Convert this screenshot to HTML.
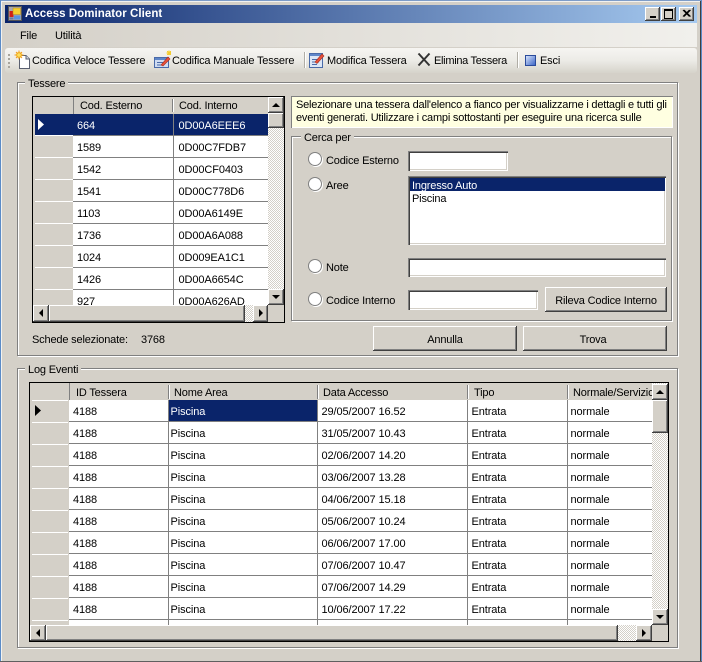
<!DOCTYPE html>
<html>
<head>
<meta charset="utf-8">
<style>
html,body{margin:0;padding:0;background:#d4d0c8}
body{position:relative;width:702px;height:662px;overflow:hidden;font:11px/13px "Liberation Sans",sans-serif;color:#000;letter-spacing:-.17px}
div,span,svg,table{position:absolute}
.t{white-space:nowrap}
.rs{background:#d4d0c8;box-shadow:inset -1px -1px #404040,inset 1px 1px #fff,inset -2px -2px #808080}
.sk{background:#fff;box-shadow:inset 1px 1px #808080,inset 2px 2px #404040,inset -1px -1px #fff,inset -2px -2px #d4d0c8}
.gb{box-sizing:border-box;border:1px solid #808080;box-shadow:1px 1px #fff,inset 1px 1px #fff}
.lb{background:#d4d0c8;padding:1px 3px 0;white-space:nowrap;height:13px}
.ck{background-color:#fff;background-image:repeating-conic-gradient(#d4d0c8 0 25%,#fff 0 50%);background-size:2px 2px}
.ar{width:0;height:0;border-style:solid;border-color:transparent}
.rad{width:12px;height:12px;border-radius:50%;background:#fff;box-shadow:0 0 0 1px #808080,1px 1px 0 1px #fff}
table{border-collapse:collapse;table-layout:fixed;font:11px "Liberation Sans",sans-serif;letter-spacing:-.1px}
td{height:19px;padding:2px 0 0 3px;border-right:1px solid #808080;border-bottom:1px solid #808080;background:#fff;white-space:nowrap;overflow:hidden;box-sizing:content-box}
td.s{background:#0a246a;color:#fff}
.tt td{padding-left:4px}
.tt td:nth-child(2){padding-left:5px}
.lt td:nth-child(1){padding-left:4px}
.lt td:nth-child(2){padding-left:2px}
.lt td:nth-child(3){padding-left:4px}
.lt td:nth-child(4){padding-left:4px}
.hd{height:16px;line-height:16px;white-space:nowrap;overflow:hidden}
.sp{width:1px;background:#808080;box-shadow:1px 0 #fff}
.btn{line-height:28px;text-align:center}
</style>
</head>
<body>
<!-- window frame -->
<div style="left:0;top:0;width:702px;height:662px;background:#d4d0c8"></div>
<div style="left:0;top:0;width:702px;height:1px;background:#7d9cc8"></div>
<div style="left:0;top:1px;width:702px;height:1px;background:#f2f2f0"></div>
<div style="left:0;top:0;width:1px;height:662px;background:#5b8bc7"></div>
<div style="left:1px;top:1px;width:1px;height:661px;background:#f2f2f0"></div>
<div style="left:701px;top:0;width:1px;height:662px;background:#5b8bc7"></div>
<div style="left:700px;top:1px;width:1px;height:660px;background:#404040"></div>
<div style="left:0;top:661px;width:702px;height:1px;background:#606060"></div>

<!-- title bar -->
<div style="left:5px;top:5px;width:692px;height:18px;background:linear-gradient(90deg,#0a246a,#a6caf0)"></div>
<svg style="left:8px;top:6px" width="14" height="15" viewBox="0 0 14 15">
<rect x=".5" y=".5" width="13" height="14" fill="#a8a8b0" stroke="#555"/>
<rect x="1.5" y="5" width="4" height="6" fill="#d02018"/>
<rect x="5" y="2" width="7.5" height="6.5" fill="#f6d030" stroke="#b08a20" stroke-width=".5"/>
<rect x="6" y="9.5" width="6.5" height="4" fill="#5a94e0"/>
<rect x="1.5" y="11.5" width="4" height="2" fill="#6a78a0"/>
</svg>
<div class="t" style="left:25px;top:8px;color:#fff;font-weight:bold;font-size:11.5px;letter-spacing:.05px">Access Dominator Client</div>
<div class="rs" style="left:645px;top:7px;width:15px;height:14px"></div>
<div style="left:650px;top:16px;width:6px;height:2px;background:#000"></div>
<div class="rs" style="left:661px;top:7px;width:15px;height:14px"></div>
<div style="left:664px;top:9px;width:7px;height:7px;border:1px solid #000;border-top-width:2px"></div>
<div class="rs" style="left:679px;top:7px;width:15px;height:14px"></div>
<svg style="left:682px;top:9px" width="9" height="9" viewBox="0 0 9 9"><path d="M1 1L7.5 7.5M2 1L8.5 7.5M7.5 1L1 7.5M8.5 1L2 7.5" stroke="#000" stroke-width="1.1" fill="none"/></svg>

<!-- menu strip -->
<div style="left:5px;top:23px;width:692px;height:24px;background:linear-gradient(90deg,#d4d0c8,#f1f0ec)"></div>
<div class="t" style="left:20px;top:30px">File</div>
<div class="t" style="left:55px;top:30px">Utilità</div>

<!-- toolbar -->
<div style="left:5px;top:48px;width:692px;height:25px;border-radius:3px;background:linear-gradient(180deg,#f6f5f2,#ecebe6 50%,#d6d3cb)"></div>
<div style="left:8px;top:54px;width:2px;height:14px;background:repeating-linear-gradient(180deg,#a8a59d 0 2px,transparent 2px 4px)"></div>

<svg style="left:14px;top:50px" width="17" height="19" viewBox="0 0 17 19">
<path d="M5.5 5.5H12L15.5 9V18.5H5.5Z" fill="#fff" stroke="#5a6070"/>
<path d="M12 5.5V9H15.5" fill="#d8dce8" stroke="#5a6070"/>
<circle cx="5" cy="5" r="3" fill="#f8c820"/>
<path d="M5 .5V9.5M.5 5H9.5M2 2L8 8M8 2L2 8" stroke="#f09820" stroke-width="1"/>
<circle cx="5" cy="5" r="1.8" fill="#fbe060"/>
</svg>
<div class="t" style="left:32px;top:55px">Codifica Veloce Tessere</div>

<svg style="left:154px;top:50px" width="18" height="19" viewBox="0 0 18 19">
<rect x=".5" y="7.5" width="14" height="10" fill="#cfdcf2" stroke="#4a6aa8"/>
<rect x="1" y="8" width="13" height="2" fill="#5f86c8"/>
<path d="M3 12.5H10M3 15H9" stroke="#4a6aa8"/>
<path d="M7 15L14 7L16 9L9 16Z" fill="#e8503a" stroke="#a83020" stroke-width=".6"/>
<rect x="13" y="1" width="4" height="4" fill="#f4cc30"/>
<path d="M15 0V2M12 3H14" stroke="#f8e080"/>
</svg>
<div class="t" style="left:172px;top:55px">Codifica Manuale Tessere</div>

<div class="sp" style="left:304px;top:52px;height:16px;background:#b0ada5"></div>

<svg style="left:309px;top:51px" width="16" height="18" viewBox="0 0 16 18">
<rect x=".5" y="2.5" width="13" height="14" fill="#dbe6f6" stroke="#4a6aa8"/>
<rect x="1" y="3" width="12" height="2" fill="#5f86c8"/>
<path d="M3 8.5H10M3 11H10M3 13.5H8" stroke="#4a6aa8"/>
<path d="M6 11L13 3L15 5L8 12.5Z" fill="#e8503a" stroke="#a83020" stroke-width=".6"/>
</svg>
<div class="t" style="left:327px;top:55px">Modifica Tessera</div>

<svg style="left:417px;top:52px" width="14" height="15" viewBox="0 0 14 15"><path d="M1.5 1.5L12.5 13.5M12.5 1.5L1.5 13.5" stroke="#333" stroke-width="2" fill="none"/></svg>
<div class="t" style="left:434px;top:55px;letter-spacing:-.3px">Elimina Tessera</div>

<div class="sp" style="left:517px;top:52px;height:16px;background:#b0ada5"></div>

<div style="left:525px;top:55px;width:9px;height:9px;border:.5px solid #2a4a9a;background:linear-gradient(135deg,#d6e2fa,#3f68c8)"></div>
<div class="t" style="left:540px;top:55px">Esci</div>

<!-- Tessere group -->
<div class="gb" style="left:17px;top:82px;width:661px;height:274px"></div>
<div class="lb" style="left:25px;top:77px">Tessere</div>

<!-- Tessere grid -->
<div style="left:32px;top:96px;width:253px;height:227px;box-sizing:border-box;border:1px solid #000;background:#d4d0c8;overflow:hidden">
  <div style="left:2px;top:38px;width:38px;height:193px;background:repeating-linear-gradient(180deg,#fff 0 1px,transparent 1px 22px)"></div>
  <div style="left:2px;top:17px;width:38px;height:21px;background:#0a246a"></div>
  <svg style="left:5px;top:22px" width="8" height="11" viewBox="0 0 8 11"><path d="M0 0L6 5.5L0 11Z" fill="#fff"/></svg>
  <div style="left:40px;top:0;width:1px;height:17px;background:#808080"></div>
  <div class="hd" style="left:47px;top:1px;width:90px">Cod. Esterno</div>
  <div class="sp" style="left:139px;top:2px;height:13px"></div>
  <div class="hd" style="left:146px;top:1px;width:88px">Cod. Interno</div>
  <table class="tt" style="left:40px;top:17px;width:195px">
  <colgroup><col style="width:100px"><col style="width:95px"></colgroup>
  <tr><td class="s">664</td><td class="s">0D00A6EEE6</td></tr>
  <tr><td>1589</td><td>0D00C7FDB7</td></tr>
  <tr><td>1542</td><td>0D00CF0403</td></tr>
  <tr><td>1541</td><td>0D00C778D6</td></tr>
  <tr><td>1103</td><td>0D00A6149E</td></tr>
  <tr><td>1736</td><td>0D00A6A088</td></tr>
  <tr><td>1024</td><td>0D009EA1C1</td></tr>
  <tr><td>1426</td><td>0D00A6654C</td></tr>
  <tr><td>927</td><td>0D00A626AD</td></tr>
  </table>
  <!-- vscroll -->
  <div class="ck" style="left:235px;top:0;width:16px;height:208px"></div>
  <div class="rs" style="left:235px;top:0;width:16px;height:16px"></div>
  <div class="ar" style="left:239px;top:6px;border-width:0 4px 4px;border-bottom-color:#000"></div>
  <div class="rs" style="left:235px;top:16px;width:16px;height:15px"></div>
  <div class="rs" style="left:235px;top:192px;width:16px;height:16px"></div>
  <div class="ar" style="left:239px;top:198px;border-width:4px 4px 0;border-top-color:#000"></div>
  <!-- hscroll -->
  <div class="ck" style="left:0;top:208px;width:235px;height:17px"></div>
  <div class="rs" style="left:0;top:208px;width:16px;height:17px"></div>
  <div class="ar" style="left:6px;top:212px;border-width:4px 4px 4px 0;border-right-color:#000"></div>
  <div class="rs" style="left:16px;top:208px;width:196px;height:17px"></div>
  <div class="rs" style="left:220px;top:208px;width:15px;height:17px"></div>
  <div class="ar" style="left:226px;top:212px;border-width:4px 0 4px 4px;border-left-color:#000"></div>
  <div style="left:235px;top:208px;width:16px;height:17px;background:#d4d0c8"></div>
</div>

<!-- info -->
<div style="left:291px;top:96px;width:382px;height:32px;background:#ffffe1;box-shadow:inset 1px 1px #808080,inset -1px -1px #fff"></div>
<div class="t" style="left:296px;top:99px;line-height:13px;font-size:11px;letter-spacing:-.21px">Selezionare una tessera dall'elenco a fianco per visualizzarne i dettagli e tutti gli<br>eventi generati. Utilizzare i campi sottostanti per eseguire una ricerca sulle</div>

<!-- Cerca per -->
<div class="gb" style="left:291px;top:136px;width:381px;height:185px"></div>
<div class="lb" style="left:301px;top:131px">Cerca per</div>

<div class="rad" style="left:309px;top:153px"></div>
<div class="t" style="left:326px;top:155px">Codice Esterno</div>
<div class="sk" style="left:408px;top:151px;width:100px;height:20px"></div>

<div class="rad" style="left:309px;top:178px"></div>
<div class="t" style="left:326px;top:180px">Aree</div>
<div class="sk" style="left:408px;top:176px;width:258px;height:69px"></div>
<div class="t" style="left:410px;top:178px;background:#0a246a;color:#fff;padding:0 0 0 2px;width:253px;line-height:17px;height:13px;overflow:hidden">Ingresso Auto</div>
<div class="t" style="left:412px;top:193px">Piscina</div>

<div class="rad" style="left:309px;top:260px"></div>
<div class="t" style="left:326px;top:262px">Note</div>
<div class="sk" style="left:408px;top:258px;width:258px;height:19px"></div>

<div class="rad" style="left:309px;top:293px"></div>
<div class="t" style="left:326px;top:295px">Codice Interno</div>
<div class="sk" style="left:408px;top:290px;width:130px;height:20px"></div>
<div class="rs btn" style="left:545px;top:287px;width:122px;height:25px">Rileva Codice Interno</div>

<div class="t" style="left:32px;top:334px">Schede selezionate:</div>
<div class="t" style="left:141px;top:334px">3768</div>
<div class="rs btn" style="left:373px;top:326px;width:144px;height:25px">Annulla</div>
<div class="rs btn" style="left:523px;top:326px;width:140px;height:25px;padding-right:4px">Trova</div>

<!-- Log group -->
<div class="gb" style="left:17px;top:368px;width:661px;height:280px"></div>
<div class="lb" style="left:25px;top:363px">Log Eventi</div>

<div style="left:29px;top:382px;width:640px;height:260px;box-sizing:border-box;border:1px solid #000;background:#d4d0c8;overflow:hidden">
  <div style="left:2px;top:17px;width:36px;height:222px;background:repeating-linear-gradient(180deg,#fff 0 1px,transparent 1px 22px)"></div>
  <svg style="left:5px;top:22px" width="8" height="11" viewBox="0 0 8 11"><path d="M0 0L6 5.5L0 11Z" fill="#000"/></svg>
  <div class="sp" style="left:39px;top:0;height:17px;box-shadow:none"></div>
  <div class="hd" style="left:46px;top:2px;width:90px">ID Tessera</div>
  <div class="sp" style="left:138px;top:2px;height:14px"></div>
  <div class="hd" style="left:144px;top:2px;width:140px">Nome Area</div>
  <div class="sp" style="left:287px;top:2px;height:14px"></div>
  <div class="hd" style="left:293px;top:2px;width:140px">Data Accesso</div>
  <div class="sp" style="left:437px;top:2px;height:14px"></div>
  <div class="hd" style="left:444px;top:2px;width:90px">Tipo</div>
  <div class="sp" style="left:537px;top:2px;height:14px"></div>
  <div class="hd" style="left:543px;top:2px;width:79px">Normale/Servizio</div>
  <table class="lt" style="left:39px;top:17px;width:583px">
  <colgroup><col style="width:99px"><col style="width:149px"><col style="width:150px"><col style="width:100px"><col style="width:85px"></colgroup>
  <tr><td>4188</td><td class="s">Piscina</td><td>29/05/2007 16.52</td><td>Entrata</td><td>normale</td></tr>
  <tr><td>4188</td><td>Piscina</td><td>31/05/2007 10.43</td><td>Entrata</td><td>normale</td></tr>
  <tr><td>4188</td><td>Piscina</td><td>02/06/2007 14.20</td><td>Entrata</td><td>normale</td></tr>
  <tr><td>4188</td><td>Piscina</td><td>03/06/2007 13.28</td><td>Entrata</td><td>normale</td></tr>
  <tr><td>4188</td><td>Piscina</td><td>04/06/2007 15.18</td><td>Entrata</td><td>normale</td></tr>
  <tr><td>4188</td><td>Piscina</td><td>05/06/2007 10.24</td><td>Entrata</td><td>normale</td></tr>
  <tr><td>4188</td><td>Piscina</td><td>06/06/2007 17.00</td><td>Entrata</td><td>normale</td></tr>
  <tr><td>4188</td><td>Piscina</td><td>07/06/2007 10.47</td><td>Entrata</td><td>normale</td></tr>
  <tr><td>4188</td><td>Piscina</td><td>07/06/2007 14.29</td><td>Entrata</td><td>normale</td></tr>
  <tr><td>4188</td><td>Piscina</td><td>10/06/2007 17.22</td><td>Entrata</td><td>normale</td></tr>
  <tr><td></td><td></td><td></td><td></td><td></td></tr>
  </table>
  <div class="ck" style="left:622px;top:0;width:16px;height:242px"></div>
  <div class="rs" style="left:622px;top:1px;width:16px;height:16px"></div>
  <div class="ar" style="left:626px;top:7px;border-width:0 4px 4px;border-bottom-color:#000"></div>
  <div class="rs" style="left:622px;top:17px;width:16px;height:33px"></div>
  <div class="rs" style="left:622px;top:226px;width:16px;height:16px"></div>
  <div class="ar" style="left:626px;top:232px;border-width:4px 4px 0;border-top-color:#000"></div>
  <div class="ck" style="left:0;top:242px;width:622px;height:16px"></div>
  <div class="rs" style="left:0;top:242px;width:16px;height:16px"></div>
  <div class="ar" style="left:6px;top:246px;border-width:4px 4px 4px 0;border-right-color:#000"></div>
  <div class="rs" style="left:16px;top:242px;width:572px;height:16px"></div>
  <div class="rs" style="left:606px;top:242px;width:16px;height:16px"></div>
  <div class="ar" style="left:612px;top:246px;border-width:4px 0 4px 4px;border-left-color:#000"></div>
  <div style="left:622px;top:242px;width:16px;height:16px;background:#d4d0c8"></div>
</div>
</body>
</html>
